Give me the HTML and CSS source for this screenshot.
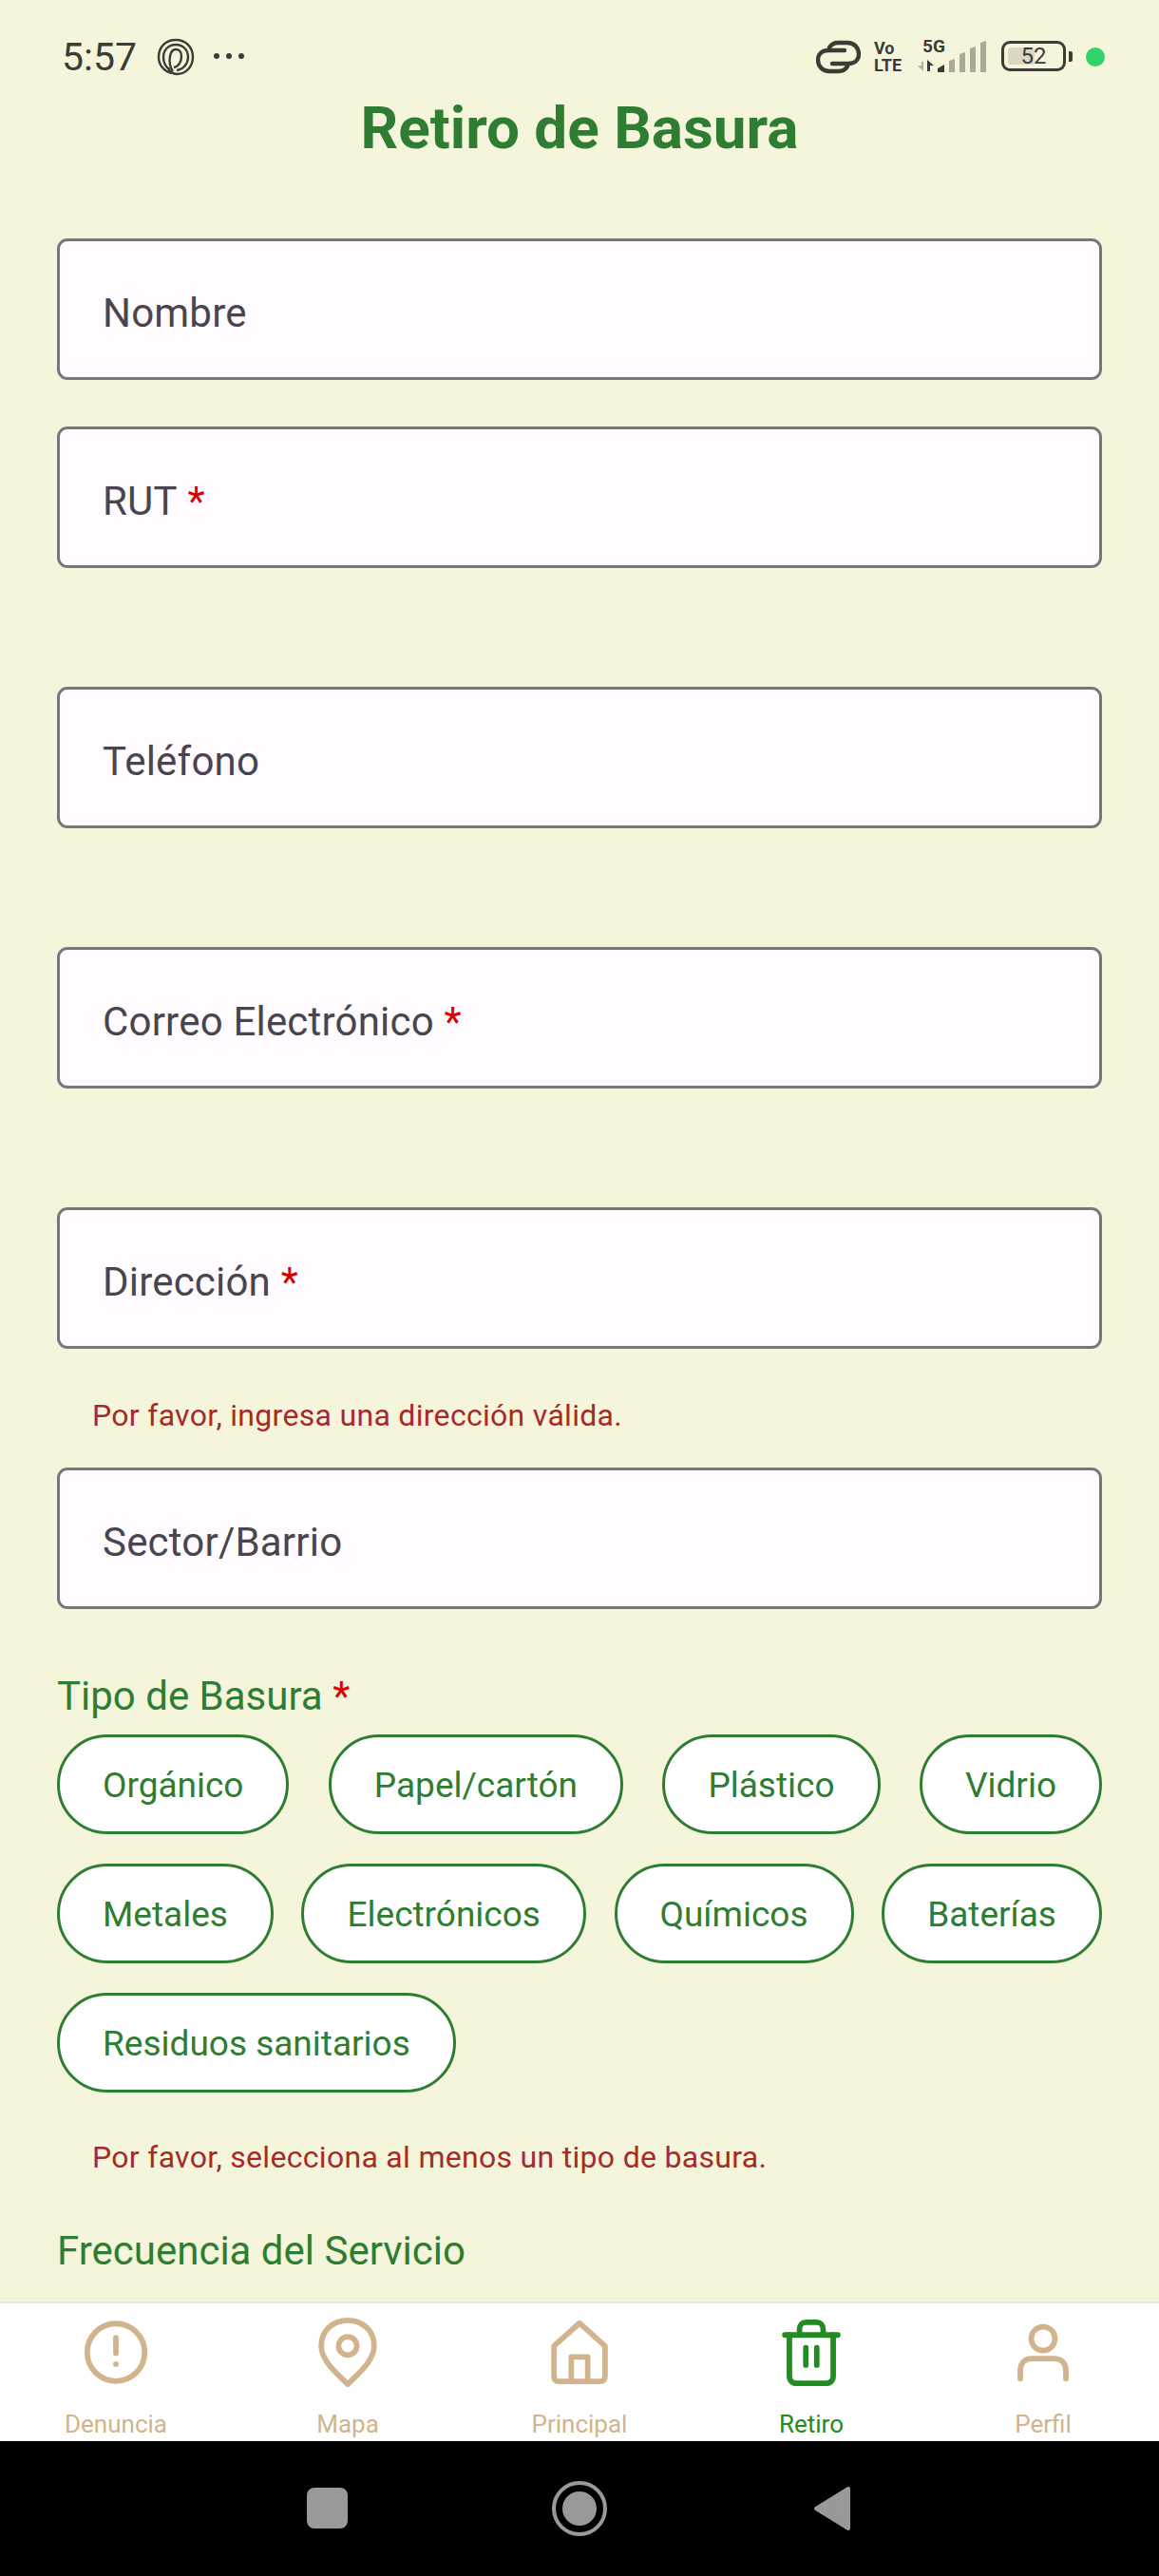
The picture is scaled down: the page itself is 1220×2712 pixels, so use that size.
FILE: index.html
```html
<!DOCTYPE html>
<html lang="es">
<head>
  <meta charset="UTF-8" />
  <meta name="viewport" content="width=device-width, initial-scale=1.0"/>
  <title>Retiro de Basura</title>
  <link rel="stylesheet" href="styles.css">
</head>
<body>
  <div class="screen">
    <div class="status-bar">
      <div class="status-left">
        <span class="clock">5:57</span>
        <svg class="fp-icon" viewBox="0 0 40 40" fill="none" stroke="#3c3c36" stroke-width="2.4">
          <path d="M16 37C7 35 2 28 2 20C2 9 10 2 20 2C30 2 38 9 38 20C38 30 31 38 21 38C17 38 13 35 12 31"/>
          <path d="M13 33C9 30 7 25 7 20C7 12 13 7 20 7C27 7 33 12 33 20C33 27 28 33 21 34"/>
          <path d="M17 35C14 31 13 25 14 19C15 14 17 12 20 12C23 12 26 14 26 19C26 25 23 30 18 31"/>
        </svg>
        <span class="dots"><i></i><i></i><i></i></span>
      </div>
      <div class="status-right">
        <svg class="link-icon" viewBox="0 0 47 36" fill="none" stroke="#3c3c36" stroke-width="4.4" stroke-linecap="round">
          <path d="M30 11H13C6 11 2 15 2 21C2 28 7 33 14 33H24C28 33 31 31 33 28"/>
          <path d="M17 25H34C41 25 45 21 45 15C45 8 40 3 33 3H23C19 3 16 5 14 8"/>
        </svg>
        <span class="volte">Vo<br>LTE</span>
        <div class="signal">
          <span class="five-g">5G</span>
          <svg class="signal-bars" viewBox="0 0 72 34">
            <path d="M6 23V33L0 27H4V23Z" fill="#b0b0a0"/>
            <path d="M10 21L17 27H13V33H10Z" fill="#3c3c36"/>
            <path d="M21 34V30L28 26V34Z" fill="#3c3c36"/>
            <path d="M33 34V22L39 20V34ZM44 34V15L50 13V34ZM55 34V9L61 7V34ZM66 34V3L72 1V34Z" fill="#aaaa98"/>
          </svg>
        </div>
        <div class="battery">
          <span class="battery-fill"></span>
          <span class="battery-num">52</span>
        </div>
        <span class="battery-tip"></span>
        <span class="rec-dot"></span>
      </div>
    </div>

    <h1 class="page-title">Retiro de Basura</h1>

    <div class="form">
      <div class="field">Nombre</div>
      <div class="gap-short"></div>

      <div class="field">RUT&nbsp;<span class="req">*</span></div>
      <div class="support"></div>

      <div class="field">Teléfono</div>
      <div class="support"></div>

      <div class="field">Correo Electrónico&nbsp;<span class="req">*</span></div>
      <div class="support"></div>

      <div class="field">Dirección&nbsp;<span class="req">*</span></div>
      <div class="support">Por favor, ingresa una dirección válida.</div>

      <div class="field">Sector/Barrio</div>

      <div class="section-label first">Tipo de Basura&nbsp;<span class="req">*</span></div>
      <div class="chips">
        <span class="chip">Orgánico</span>
        <span class="chip">Papel/cartón</span>
        <span class="chip">Plástico</span>
        <span class="chip">Vidrio</span>
        <span class="chip">Metales</span>
        <span class="chip">Electrónicos</span>
        <span class="chip">Químicos</span>
        <span class="chip">Baterías</span>
        <span class="chip">Residuos sanitarios</span>
      </div>
      <div class="support chips-error">Por favor, selecciona al menos un tipo de basura.</div>
      <div class="section-label">Frecuencia del Servicio</div>
    </div>

    <div class="bottom-nav">
      <div class="nav-item">
        <svg class="nav-icon" viewBox="0 0 76 76" fill="none" stroke="currentColor" stroke-width="6" stroke-linecap="round">
          <circle cx="38" cy="38" r="31.5"/>
          <path d="M38 22V39"/>
          <circle cx="38" cy="51" r="3" fill="currentColor" stroke="none"/>
        </svg>
        <span>Denuncia</span>
      </div>
      <div class="nav-item">
        <svg class="nav-icon" viewBox="0 0 76 76" fill="none" stroke="currentColor" stroke-width="6" stroke-linejoin="round">
          <path d="M38 73C26 61 9 47 9 31C9 14 22 3 38 3C54 3 67 14 67 31C67 47 50 61 38 73Z"/>
          <circle cx="38" cy="31" r="10"/>
        </svg>
        <span>Mapa</span>
      </div>
      <div class="nav-item">
        <svg class="nav-icon" viewBox="0 0 76 76" fill="none" stroke="currentColor" stroke-width="6" stroke-linejoin="round">
          <path d="M10 31L38 6L66 31V64C66 68 64 70 60 70H16C12 70 10 68 10 64Z"/>
          <path d="M29 70V43H47V70"/>
        </svg>
        <span>Principal</span>
      </div>
      <div class="nav-item active">
        <svg class="nav-icon" viewBox="0 0 76 76" fill="none" stroke="currentColor" stroke-width="6" stroke-linecap="round" stroke-linejoin="round">
          <path d="M9 19H67"/>
          <path d="M14 19V64C14 69 17 72 22 72H54C59 72 62 69 62 64V19"/>
          <path d="M25 19V13C25 8 28 5 32 5H44C48 5 51 8 51 13V19"/>
          <path d="M32 33V52M44 33V52"/>
        </svg>
        <span>Retiro</span>
      </div>
      <div class="nav-item">
        <svg class="nav-icon" viewBox="0 0 76 76" fill="none" stroke="currentColor" stroke-width="6" stroke-linecap="round">
          <circle cx="38" cy="23" r="13"/>
          <path d="M13 67V58C13 49 19 45 26 45H50C57 45 63 49 63 58V67"/>
        </svg>
        <span>Perfil</span>
      </div>
    </div>

    <div class="system-nav">
      <span class="sys-square"></span>
      <span class="sys-home"></span>
      <svg class="sys-back" viewBox="0 0 40 48"><path d="M37 3V45L3 24Z" fill="#999" stroke="#999" stroke-width="4" stroke-linejoin="round"/></svg>
    </div>
  </div>
</body>
</html>
```

FILE: styles.css
```css
html, body {
  margin: 0;
  padding: 0;
}

body {
  font-family: Roboto, "Liberation Sans", sans-serif;
  background-color: #f5f5dc;
}

.screen {
  width: 1220px;
  height: 2712px;
  display: flex;
  flex-direction: column;
  overflow: hidden;
}

/* status bar */
.status-bar {
  height: 90px;
  flex: none;
  padding: 36px 57px 0 65px;
  box-sizing: border-box;
  display: flex;
  justify-content: space-between;
  align-items: flex-start;
  color: #3c3c36;
}

.status-left {
  display: flex;
  align-items: center;
  height: 48px;
}

.clock {
  font-size: 41px;
  line-height: 48px;
}

.fp-icon {
  width: 40px;
  height: 40px;
  margin-left: 21px;
}

.dots {
  display: flex;
  gap: 7px;
  margin-left: 20px;
  margin-bottom: 2px;
}

.dots i {
  width: 6px;
  height: 6px;
  border-radius: 50%;
  background-color: #3c3c36;
}

.status-right {
  display: flex;
  align-items: flex-start;
  padding-top: 6px;
}

.link-icon {
  width: 47px;
  height: 36px;
}

.volte {
  margin-left: 14px;
  width: 35px;
  font-size: 18px;
  line-height: 18px;
  font-weight: 700;
}

.signal {
  position: relative;
  width: 72px;
  height: 36px;
  margin-left: 11px;
}

.five-g {
  position: absolute;
  left: 5px;
  top: -3px;
  font-size: 19px;
  line-height: 20px;
  font-weight: 700;
}

.signal-bars {
  position: absolute;
  left: 0;
  top: 0;
  width: 72px;
  height: 34px;
}

.battery {
  position: relative;
  width: 68px;
  height: 32px;
  margin-left: 16px;
  box-sizing: border-box;
  border: 3px solid #3c3c36;
  border-radius: 9px;
  margin-top: 1px;
}

.battery-fill {
  position: absolute;
  left: 4px;
  top: 4px;
  bottom: 4px;
  width: 28px;
  background-color: #d9d9c3;
  border-radius: 3px;
}

.battery-num {
  position: absolute;
  left: 0;
  right: 0;
  top: 0;
  text-align: center;
  font-size: 24px;
  line-height: 27px;
}

.battery-tip {
  width: 4px;
  height: 11px;
  margin: 12px 0 0 3px;
  background-color: #3c3c36;
  border-radius: 0 2px 2px 0;
}

.rec-dot {
  width: 20px;
  height: 20px;
  margin: 8px 0 0 14px;
  border-radius: 50%;
  background-color: #34d26a;
}

/* form */
.page-title {
  margin: 0 0 71px;
  flex: none;
  height: 90px;
  line-height: 90px;
  text-align: center;
  font-size: 62px;
  font-weight: 700;
  color: #2e7d32;
}

.form {
  flex: 1;
  min-height: 0;
  overflow: hidden;
  padding: 0 60px;
}

.field {
  height: 149px;
  box-sizing: border-box;
  padding: 7px 45px 0;
  display: flex;
  align-items: center;
  background-color: #fffbfe;
  border: 3px solid #79747e;
  border-radius: 11px;
  font-size: 42px;
  letter-spacing: 0.2px;
  color: #49454f;
}

.req {
  color: #dd0000;
}

.gap-short {
  height: 49px;
}

.support {
  height: 125px;
  box-sizing: border-box;
  padding: 48px 0 0 37px;
  font-size: 32px;
  line-height: 44px;
  letter-spacing: 0.3px;
  color: #a52a2a;
}

.section-label {
  height: 60px;
  line-height: 64px;
  font-size: 42px;
  color: #2e7d32;
}

.section-label.first {
  margin-top: 60px;
}

.chips {
  display: flex;
  flex-wrap: wrap;
  justify-content: space-between;
  gap: 31px 24px;
  margin-top: 12px;
}

.chip {
  height: 105px;
  box-sizing: border-box;
  padding: 2px 45px 0;
  display: flex;
  align-items: center;
  background-color: #fff;
  border: 3px solid #2e7d32;
  border-radius: 53px;
  font-size: 37px;
  color: #2e7d32;
}

.chips-error {
  height: 135px;
  padding-top: 46px;
}

/* bottom nav */
.bottom-nav {
  height: 147px;
  flex: none;
  box-sizing: border-box;
  display: flex;
  background-color: #fff;
  border-top: 2px solid #e8e8e2;
  overflow: hidden;
}

.nav-item {
  flex: 1;
  display: flex;
  flex-direction: column;
  align-items: center;
  padding-top: 15px;
  color: #d2b48c;
  font-size: 26px;
  line-height: 36px;
}

.nav-item.active {
  color: #228b22;
}

.nav-icon {
  width: 76px;
  height: 76px;
  margin-bottom: 21px;
}

/* system nav */
.system-nav {
  height: 142px;
  flex: none;
  position: relative;
  background-color: #000;
}

.sys-square {
  position: absolute;
  left: 323px;
  top: 49px;
  width: 43px;
  height: 43px;
  border-radius: 8px;
  background-color: #999;
}

.sys-home {
  position: absolute;
  left: 581px;
  top: 42px;
  width: 58px;
  height: 58px;
  box-sizing: border-box;
  border: 4px solid #999;
  border-radius: 50%;
}

.sys-home::after {
  content: "";
  position: absolute;
  left: 7px;
  top: 7px;
  width: 36px;
  height: 36px;
  border-radius: 50%;
  background-color: #999;
}

.sys-back {
  position: absolute;
  left: 856px;
  top: 47px;
  width: 40px;
  height: 48px;
}
```
